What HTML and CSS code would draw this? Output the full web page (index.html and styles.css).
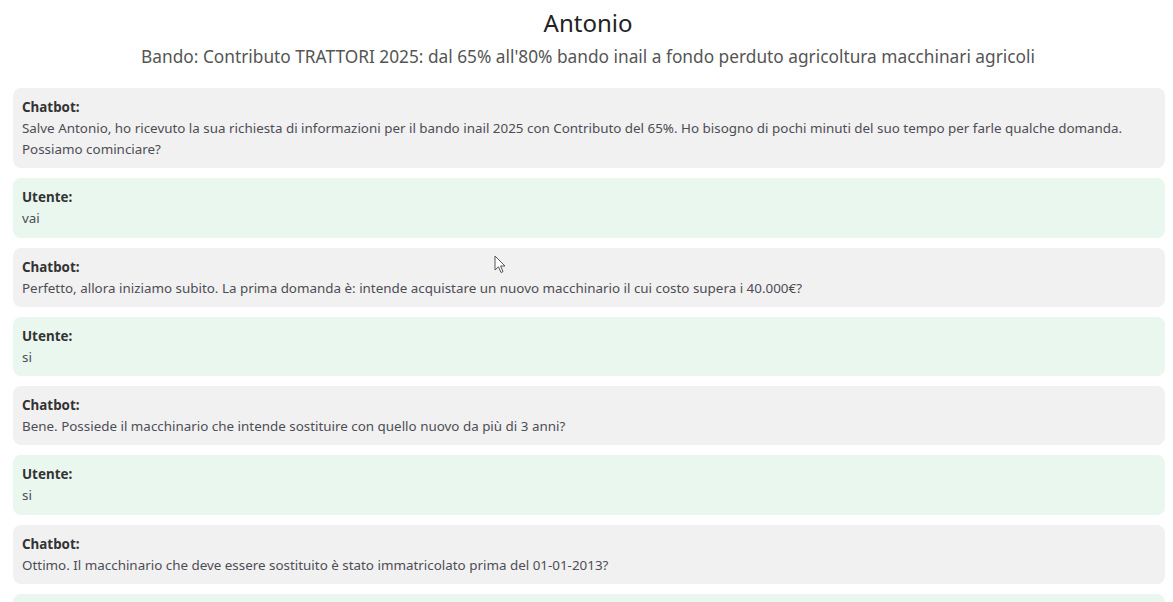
FILE: index.html
```html
<!DOCTYPE html>
<html lang="it">
<head>
<meta charset="utf-8">
<title>Antonio</title>
<link rel="stylesheet" href="styles.css">
</head>
<body>
<header class="head">
  <h1 class="title">Antonio</h1>
  <h2 class="subtitle">Bando: Contributo TRATTORI 2025: dal 65% all'80% bando inail a fondo perduto agricoltura macchinari agricoli</h2>
</header>
<main class="chat">
  <div class="msg bot"><div class="who">Chatbot:</div><div class="text">Salve Antonio, ho ricevuto la sua richiesta di informazioni per il bando inail 2025 con Contributo del 65%. Ho bisogno di pochi minuti del suo tempo per farle qualche domanda. Possiamo cominciare?</div></div>
  <div class="msg user"><div class="who">Utente:</div><div class="text">vai</div></div>
  <div class="msg bot"><div class="who">Chatbot:</div><div class="text">Perfetto, allora iniziamo subito. La prima domanda è: intende acquistare un nuovo macchinario il cui costo supera i 40.000€?</div></div>
  <div class="msg user"><div class="who">Utente:</div><div class="text">si</div></div>
  <div class="msg bot"><div class="who">Chatbot:</div><div class="text">Bene. Possiede il macchinario che intende sostituire con quello nuovo da più di 3 anni?</div></div>
  <div class="msg user"><div class="who">Utente:</div><div class="text">si</div></div>
  <div class="msg bot"><div class="who">Chatbot:</div><div class="text">Ottimo. Il macchinario che deve essere sostituito è stato immatricolato prima del 01-01-2013?</div></div>
  <div class="msg user"><div class="who">Utente:</div><div class="text">si</div></div>
</main>
<svg class="cursor" width="12" height="19" viewBox="0 0 12 19"><path d="M1 1 L1 15 L4.5 11.8 L7 17.5 L9 16.6 L6.6 11 L11 11 Z" fill="#fff" stroke="#555" stroke-width="1"/></svg>
</body>
</html>
```
FILE: styles.css
```css
html, body {
  margin: 0;
  padding: 0;
  background: #ffffff;
}
body {
  font-family: "Noto Sans", "Open Sans", "DejaVu Sans", sans-serif;
  color: #333;
  overflow: hidden;
  height: 602px;
  position: relative;
}
.head {
  text-align: center;
  padding-top: 8px;
}
.title {
  margin: 0 0 0 3px;
  font-size: 24px;
  font-weight: 400;
  line-height: 30px;
  color: #222;
}
.subtitle {
  margin: 7px 0 0 3px;
  font-size: 17.3px;
  font-weight: 400;
  line-height: 24px;
  color: #555;
}
.chat {
  display: flex;
  flex-direction: column;
  gap: 10px;
  padding: 19px 8px 0 13px;
}
.msg {
  border-radius: 8px;
  padding: 9px 9px 8.3px;
  font-size: 13.4px;
  line-height: 21px;
}
.bot { background: #f1f1f1; }
.user { background: #e9f7ef; }
.who {
  font-weight: 700;
  color: #333;
}
.text {
  color: #4d4d55;
}
.cursor {
  position: absolute;
  left: 494px;
  top: 255px;
}
```
